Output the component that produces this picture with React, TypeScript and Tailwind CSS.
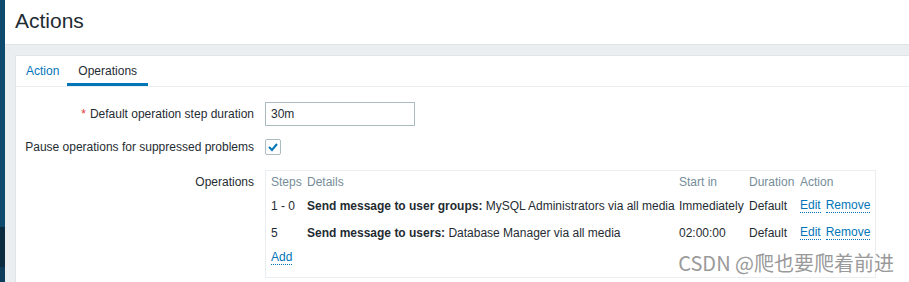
import React from "react";

const ops = [
  {
    steps: "1 - 0",
    label: "Send message to user groups:",
    target: "MySQL Administrators via all media",
    start: "Immediately",
    duration: "Default",
  },
  {
    steps: "5",
    label: "Send message to users:",
    target: "Database Manager via all media",
    start: "02:00:00",
    duration: "Default",
  },
];

function Link({ children }: { children: React.ReactNode }) {
  return (
    <span className="text-[#0275b8] border-b border-dotted border-[#0275b8] leading-[13px]">
      {children}
    </span>
  );
}

export default function App() {
  return (
    <div className="relative flex h-[282px] w-[909px] overflow-hidden bg-white font-['Liberation_Sans',Arial,sans-serif] text-[12px] text-[#1f2c33]">
      {/* sidebar edge */}
      <div className="flex w-[5px] flex-col">
        <div className="h-[227px] bg-[#0d4a6d]" />
        <div className="h-[40px] bg-[#0b2b40]" />
        <div className="flex-1 bg-[#0d3c5a]" />
      </div>

      <div className="flex flex-1 flex-col">
        <header className="h-[44px] px-[10px] pt-[9px]">
          <h1 className="text-[21px] leading-[24px]">Actions</h1>
        </header>

        <div className="flex flex-1 flex-col border-t border-[#dfe4e7] bg-[#ebeef0] pl-[10px] pt-[10px]">
          <div className="flex-1 border-l border-t border-[#dfe4e7] bg-white">
            <div className="flex h-[31px] border-b border-[#ebeef0] pl-[10px]">
              <div className="flex h-[30px] items-center pr-[8px] text-[#0275b8]">Action</div>
              <div className="flex h-[30px] items-center border-b-[3px] border-[#0275b8] px-[11px] pt-[3px]">
                Operations
              </div>
            </div>

            <div className="grid grid-cols-[238px_1fr] gap-x-[11px] pt-[15px]">
              <div className="flex h-[24px] items-center justify-end">
                <span className="mr-[4px] text-[#e33734]">*</span>Default operation step duration
              </div>
              <div>
                <div className="flex h-[24px] w-[150px] items-center border border-[#acbbc2] px-[5px]">30m</div>
              </div>

              <div className="mt-[9px] flex h-[24px] items-center justify-end">
                Pause operations for suppressed problems
              </div>
              <div className="mt-[9px] flex h-[24px] items-center">
                <div className="flex h-[16px] w-[16px] items-center justify-center rounded-[2px] border border-[#acbbc2]">
                  <svg width="12" height="12" viewBox="0 0 12 12">
                    <polyline points="2,6 5,9 10,3" fill="none" stroke="#0275b8" strokeWidth="2" />
                  </svg>
                </div>
              </div>

              <div className="mt-[11px] pt-[5px] text-right leading-[14px]">Operations</div>
              <div className="mt-[11px]">
                <div className="h-[108px] w-[611px] border border-[#ebeef0] px-[5px]">
                  <div className="grid h-[21px] grid-cols-[36px_372px_70px_51px_1fr] pt-[4px] leading-[14px] text-[#768d99]">
                    <div>Steps</div>
                    <div>Details</div>
                    <div>Start in</div>
                    <div>Duration</div>
                    <div>Action</div>
                  </div>
                  {ops.map((o) => (
                    <div
                      key={o.steps}
                      className="grid h-[27px] grid-cols-[36px_372px_70px_51px_1fr] items-center leading-[14px]"
                    >
                      <div>{o.steps}</div>
                      <div className="whitespace-nowrap">
                        <span className="font-bold">{o.label}</span> {o.target}
                      </div>
                      <div>{o.start}</div>
                      <div>{o.duration}</div>
                      <div className="flex gap-[5px]">
                        <Link>Edit</Link>
                        <Link>Remove</Link>
                      </div>
                    </div>
                  ))}
                  <div className="pt-[4px] leading-[14px]">
                    <Link>Add</Link>
                  </div>
                </div>
              </div>
            </div>
          </div>
        </div>
      </div>

      <div className="pointer-events-none absolute bottom-[8px] right-[15px] text-[20px] leading-[22px] text-[#9a9a9a] font-['Noto_Sans_CJK_SC','Noto_Sans',sans-serif] [text-shadow:0_0_2px_#fff]">
        CSDN @爬也要爬着前进
      </div>
    </div>
  );
}
